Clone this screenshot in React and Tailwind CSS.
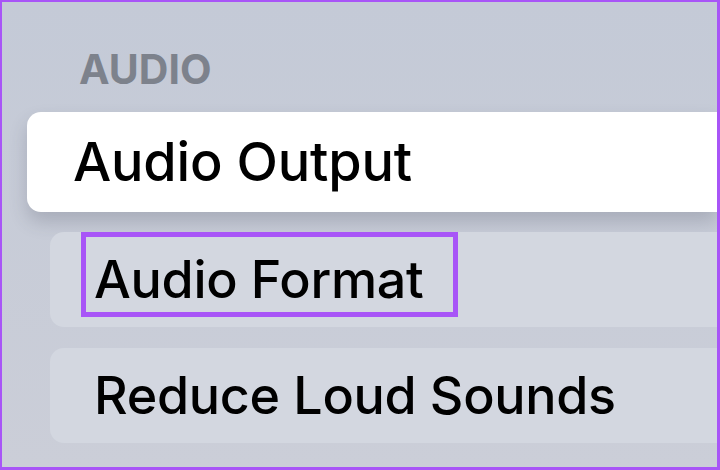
export default function App() {
  return (
    <div className="w-[720px] h-[470px] overflow-hidden border-solid border-[#a855f7] border-t-2 border-l-2 border-r-[3px] border-b-[3px] bg-gradient-to-b from-[#c4cad7] to-[#cbced8] flex flex-col font-['Inter',sans-serif]">
      <div className="pt-[47px] pl-[77px] text-[41px] leading-none font-bold text-[#7d828c]">AUDIO</div>
      <div className="mt-[22px] ml-[25px] h-[100px] shrink-0 flex items-center pl-[46px] bg-white rounded-l-[14px] shadow-[0_10px_18px_rgba(60,66,80,0.22)]">
        <span className="text-[54px] leading-none font-medium tracking-[-0.2px] text-black">Audio Output</span>
      </div>
      <div className="relative mt-[20px] ml-[48px] h-[95px] shrink-0 flex items-center pl-[44px] bg-[#d3d7e0] rounded-l-[14px]">
        <span className="text-[52px] leading-none font-medium tracking-[-0.3px] text-black">Audio Format</span>
        <div className="absolute left-[31px] top-0 w-[377px] h-[85px] border-[5px] border-[#a855f7]"></div>
      </div>
      <div className="mt-[21px] ml-[48px] h-[95px] shrink-0 flex items-center pl-[44px] bg-[#d3d7e0] rounded-l-[14px]">
        <span className="text-[52px] leading-none font-medium tracking-[-0.3px] text-black">Reduce Loud Sounds</span>
      </div>
    </div>
  );
}
